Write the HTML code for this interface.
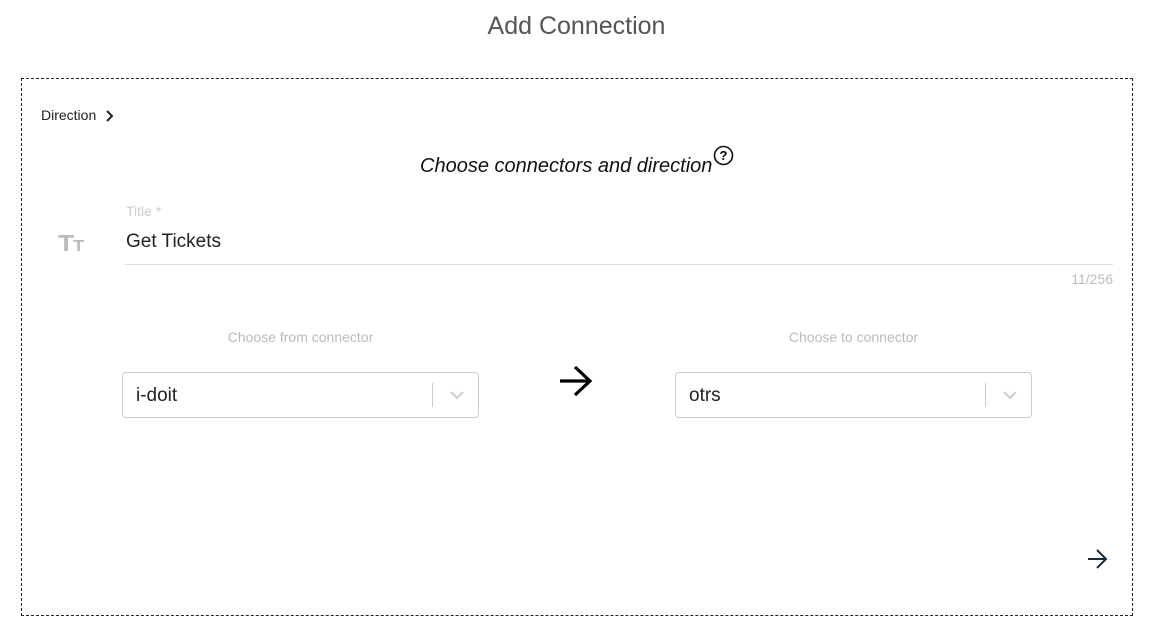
<!DOCTYPE html>
<html><head><style>
body{margin:0;width:1161px;height:633px;background:#fff;font-family:"Liberation Sans",sans-serif;position:relative;overflow:hidden}
.a{position:absolute}
.sel{position:absolute;width:355px;height:44px;border:1px solid #ccc;border-radius:4px;top:372px}
.sel .t{position:absolute;left:13px;top:12px;font-size:19px;color:#222}
.sel .bar{position:absolute;right:45px;top:10px;width:1px;height:24px;background:#ccc}
</style></head><body>
<div class="a" style="left:0;width:1153px;top:12px;text-align:center;font-size:25px;color:#555">Add Connection</div>
<div class="a" style="left:21px;top:78px;width:1110px;height:536px;border:1px dashed #222"></div>
<div class="a" style="left:41px;top:107px;font-size:14px;color:#222">Direction</div>
<svg class="a" style="left:105px;top:110px" width="10" height="12"><path d="M2 1l5 5-5 5" stroke="#222" stroke-width="2" fill="none"/></svg>
<div class="a" style="left:420px;top:155px;font-size:20px;font-style:italic;color:#111">Choose connectors and direction</div>
<svg class="a" style="left:713px;top:145px" width="21" height="21"><circle cx="10.5" cy="10.5" r="9" stroke="#111" stroke-width="1.6" fill="none"/><text x="10.5" y="15" font-size="13" font-weight="bold" text-anchor="middle" font-family="Liberation Sans">?</text></svg>
<div class="a" style="left:58px;top:230px;font-size:23px;font-weight:bold;color:#bbb;letter-spacing:-1px;transform:scaleX(1.15);transform-origin:left">T<span style="font-size:16px">T</span></div>
<div class="a" style="left:126px;top:203px;font-size:14px;color:#ccc">Title *</div>
<div class="a" style="left:126px;top:231px;font-size:19px;color:#222">Get Tickets</div>
<div class="a" style="left:125px;top:264px;width:988px;height:1px;background:#ddd"></div>
<div class="a" style="left:1060px;top:271px;width:53px;text-align:right;font-size:14px;color:#bbb">11/256</div>
<div class="a" style="left:122px;width:357px;top:329px;text-align:center;font-size:14px;color:#bbb">Choose from connector</div>
<div class="a" style="left:675px;width:357px;top:329px;text-align:center;font-size:14px;color:#bbb">Choose to connector</div>
<div class="sel" style="left:122px"><div class="t">i-doit</div><div class="bar"></div><svg class="a" style="right:14px;top:17px" width="14" height="10"><path d="M1 2l6 6 6-6" stroke="#ccc" stroke-width="2" fill="none"/></svg></div>
<div class="sel" style="left:675px"><div class="t">otrs</div><div class="bar"></div><svg class="a" style="right:14px;top:17px" width="14" height="10"><path d="M1 2l6 6 6-6" stroke="#ccc" stroke-width="2" fill="none"/></svg></div>
<svg class="a" style="left:558px;top:364px" width="36" height="34"><path d="M2 17h30M17 3l15 14-15 14" stroke="#000" stroke-width="3.2" fill="none"/></svg>
<svg class="a" style="left:1087px;top:548px" width="22" height="22"><path d="M1 11h18M10 2l9 9-9 9" stroke="#1a2a3a" stroke-width="2" fill="none"/></svg>
</body></html>
